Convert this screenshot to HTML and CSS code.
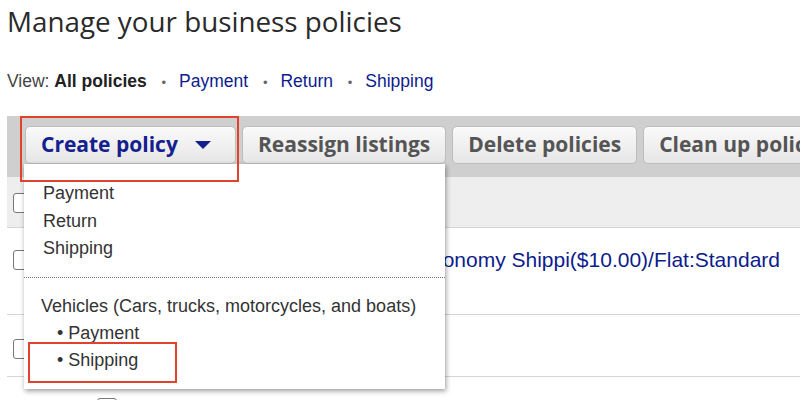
FILE: index.html
```html
<!DOCTYPE html>
<html>
  <head>
    <title>Business policies</title>
    <meta charset="utf-8" />
    <link rel="stylesheet" href="styles.css">
  </head>
  <body>
    <h1 class="page_title">Manage your business policies</h1>

    <div class="view_bar">
      View: <b>All policies</b>
      <span class="dot">•</span> <a href="#">Payment</a>
      <span class="dot">•</span> <a href="#">Return</a>
      <span class="dot">•</span> <a href="#">Shipping</a>
    </div>

    <div class="policy_area">
      <div class="toolbar">
        <div class="button button_primary">Create policy <span class="caret"></span></div>
        <div class="button">Reassign listings</div>
        <div class="button">Delete policies</div>
        <div class="button">Clean up policies</div>
      </div>

      <div class="table_head">
        <span class="checkbox"></span>
      </div>
      <div class="table_row row_tall">
        <span class="checkbox"></span>
        <a class="policy_name" href="#">Flat:Economy Shippi($10.00)/Flat:Standard</a>
      </div>
      <div class="table_row row_short">
        <span class="checkbox"></span>
      </div>
      <div class="table_row row_sub">
        <span class="checkbox"></span>
      </div>

      <div class="dropdown">
        <div class="dropdown_item">Payment</div>
        <div class="dropdown_item">Return</div>
        <div class="dropdown_item">Shipping</div>
        <div class="dropdown_sep"></div>
        <div class="dropdown_group">Vehicles (Cars, trucks, motorcycles, and boats)</div>
        <div class="dropdown_item sub_item">• Payment</div>
        <div class="dropdown_item sub_item">• Shipping</div>
      </div>

      <div class="mark mark_button"></div>
      <div class="mark mark_item"></div>
    </div>
  </body>
</html>
```

FILE: styles.css
```css
* {
  margin: 0;
  padding: 0;
  box-sizing: border-box;
}

body {
  background-color: white;
  color: #333;
  font-family: "Liberation Sans", Arial, sans-serif;
  font-size: 18px;
  padding-left: 7px;
  overflow: hidden;
}

a {
  color: #0d1c8c;
  text-decoration: none;
}

.page_title {
  font-family: "Open Sans", "DejaVu Sans", sans-serif;
  font-weight: normal;
  font-size: 27.8px;
  color: #2a2a2a;
  line-height: 40px;
  padding-top: 1px;
}

.view_bar {
  margin-top: 30px;
  line-height: 20px;
  font-size: 17.5px;
  color: #444;
}

.view_bar b {
  color: #222;
}

.view_bar .dot {
  color: #666;
  font-size: 13px;
  margin: 0 8px 0 10px;
}

.policy_area {
  position: relative;
  margin-top: 23px;
}

.toolbar {
  background-color: #cfcfcf;
  height: 61px;
  padding: 10px 0 0 18px;
  display: flex;
  gap: 6px;
  white-space: nowrap;
  overflow: hidden;
}

.button {
  height: 38px;
  padding: 0 15px;
  border: 1px solid #bdbdbd;
  border-radius: 5px;
  background: linear-gradient(#fafafa, #e6e6e6);
  font-family: "Open Sans", "DejaVu Sans", sans-serif;
  font-weight: bold;
  font-size: 21px;
  line-height: 34px;
  color: #555;
  flex-shrink: 0;
}

.button_primary {
  color: #14208c;
  width: 211px;
}

.caret {
  display: inline-block;
  width: 0;
  height: 0;
  border-left: 8px solid transparent;
  border-right: 8px solid transparent;
  border-top: 8px solid #14208c;
  margin-left: 12px;
  vertical-align: 3px;
}

.table_head {
  background-color: #eeeeee;
  height: 51px;
  border-bottom: 1px solid #d6d6d6;
  padding: 16px 0 0 6px;
}

.table_row {
  border-bottom: 1px solid #d6d6d6;
  padding-left: 6px;
  display: flex;
  align-items: flex-start;
}

.row_tall {
  height: 87px;
  padding-top: 22px;
}

.row_short {
  height: 62px;
  padding-top: 24px;
}

.row_sub {
  height: 40px;
  padding: 21px 0 0 90px;
  border-bottom: none;
}

.checkbox {
  display: inline-block;
  width: 20px;
  height: 20px;
  border: 1px solid #777;
  border-radius: 3px;
  background-color: white;
}

.policy_name {
  margin-left: auto;
  margin-right: 20px;
  margin-top: -4px;
  font-size: 21px;
  line-height: 28px;
}

.dropdown {
  position: absolute;
  left: 17px;
  top: 48px;
  width: 421px;
  height: 225px;
  background-color: white;
  box-shadow: 1px 2px 5px rgba(0, 0, 0, 0.4);
  padding-top: 16px;
}

.dropdown_item {
  padding-left: 19px;
  line-height: 27.5px;
  color: #333;
}

.dropdown_sep {
  border-top: 1px dotted #777;
  margin: 14px 0 14px 0;
}

.dropdown_group {
  padding-left: 17px;
  line-height: 28px;
  color: #333;
}

.sub_item {
  padding-left: 33px;
}

.mark {
  position: absolute;
  border: 2px solid #e0432c;
}

.mark_button {
  left: 13px;
  top: 0;
  width: 219px;
  height: 66px;
}

.mark_item {
  left: 21px;
  top: 226px;
  width: 149px;
  height: 41px;
}
```
